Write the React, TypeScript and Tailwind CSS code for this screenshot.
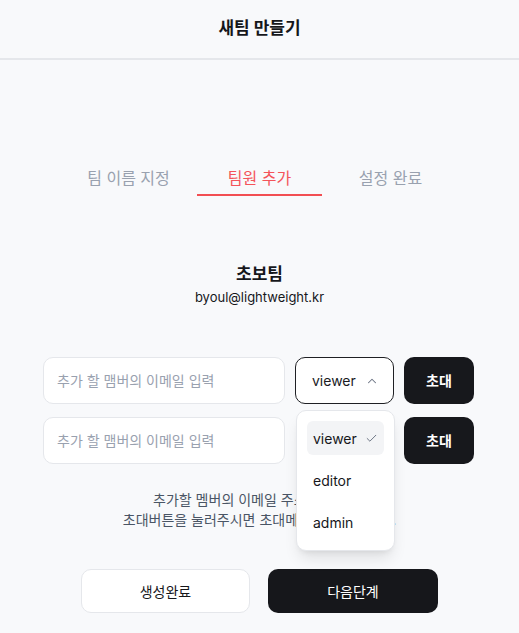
import { Check, ChevronUp } from 'lucide-react';

const font = { fontFamily: 'Inter, "Noto Sans CJK KR", sans-serif' };

function InviteRow({ open }: { open?: boolean }) {
  return (
    <div className="flex items-center gap-[10px]">
      <div className="w-[242px] h-[47px] rounded-[10px] border border-gray-200 bg-white flex items-center px-[13px] text-[14px] text-gray-400">
        추가 할 맴버의 이메일 입력
      </div>
      <div className="relative">
        {open ? (
          <div className="w-[99px] h-[47px] rounded-[10px] border border-[#1f2024] bg-white flex items-center pl-[16px] pr-[14px] justify-between text-[14px] text-[#1a1b1f]">
            <span>viewer</span>
            <ChevronUp className="h-[14px] w-[14px] text-gray-500" strokeWidth={1.8} />
          </div>
        ) : (
          <div className="w-[99px] h-[47px]" />
        )}
      </div>
      <button className="w-[70px] h-[47px] rounded-[10px] bg-[#17181c] text-white text-[14px] font-bold">
        초대
      </button>
    </div>
  );
}

export default function App() {
  return (
    <div className="min-h-[633px] bg-[#f8f9fb] text-[#16171b] relative" style={font}>
      <header className="h-[60px] border-b-2 border-gray-200 flex items-center justify-center">
        <h1 className="text-[17px] font-bold">새팀 만들기</h1>
      </header>

      <nav className="mt-[102px] flex justify-center gap-[6px]">
        <div className="w-[125px] h-[34px] flex items-start justify-center text-[16px] text-gray-400 pt-[4px]">
          팀 이름 지정
        </div>
        <div className="w-[125px] h-[34px] flex items-start justify-center text-[16px] text-[#f4545a] pt-[4px] border-b-2 border-[#f24e52]">
          팀원 추가
        </div>
        <div className="w-[125px] h-[34px] flex items-start justify-center text-[16px] text-gray-400 pt-[4px]">
          설정 완료
        </div>
      </nav>

      <section className="mt-[66px] flex flex-col items-center">
        <h2 className="text-[17px] font-bold leading-[24px]">초보팀</h2>
        <p className="text-[13px] leading-[20px] mt-[1px]">byoul@lightweight.kr</p>
      </section>

      <div className="relative mt-[50px] flex flex-col items-center gap-[13px] pr-[2px]">
        <InviteRow open />
        <InviteRow />
        <div className="absolute left-[296px] top-[53px] w-[99px] h-[141px] rounded-[10px] border border-gray-200 bg-white shadow-lg p-[10px] flex flex-col gap-[8px] text-[14px] z-10">
          <div className="h-[34px] rounded-[6px] bg-gray-100 flex items-center justify-between px-[6px]">
            <span>viewer</span>
            <Check className="h-[13px] w-[13px] text-gray-500" strokeWidth={1.8} />
          </div>
          <div className="h-[34px] flex items-center px-[6px]">editor</div>
          <div className="h-[34px] flex items-center px-[6px]">admin</div>
        </div>
      </div>

      <p className="mt-[26px] text-center text-[14px] leading-[20px] text-gray-600">
        추가할 멤버의 이메일 주소를 입력 후
        <br />
        초대버튼을 눌러주시면 초대메일이 발송됩니다.
      </p>

      <div className="mt-[39px] flex justify-center gap-[18px]">
        <button className="w-[169px] h-[44px] rounded-[10px] border border-gray-200 bg-white text-[14px]">
          생성완료
        </button>
        <button className="w-[170px] h-[44px] rounded-[10px] bg-[#16171b] text-white text-[14px]">
          다음단계
        </button>
      </div>
    </div>
  );
}
